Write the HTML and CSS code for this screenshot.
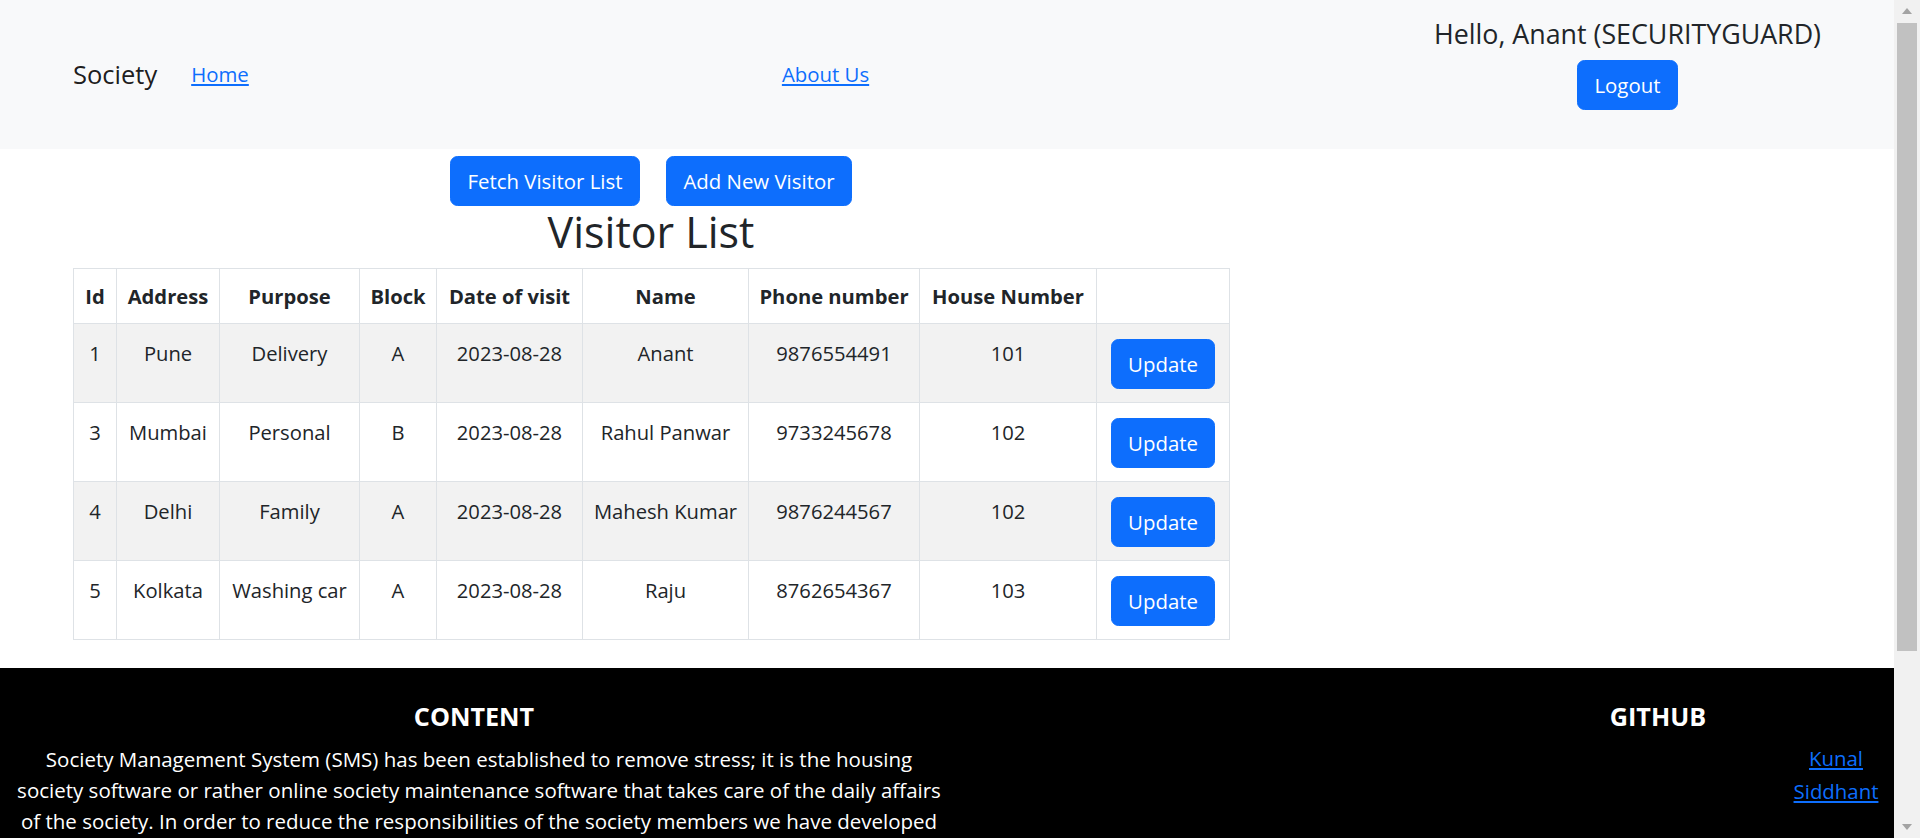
FILE: index.html
```html
<!DOCTYPE html>
<html lang="en">
<head>
<meta charset="utf-8">
<title>Society - Visitor List</title>
<link rel="stylesheet" href="styles.css">
</head>
<body>
<div class="page">
  <nav class="navbar">
    <a class="brand" href="#">Society</a>
    <div class="nav-links">
      <a href="#">Home</a>
      <a href="#">About Us</a>
    </div>
    <div class="user">
      <h4 class="hello">Hello, Anant (SECURITYGUARD)</h4>
      <button class="btn logout" type="button">Logout</button>
    </div>
  </nav>

  <main class="main">
    <div class="actions">
      <button class="btn" type="button">Fetch Visitor List</button>
      <button class="btn" type="button">Add New Visitor</button>
    </div>
    <h1 class="title">Visitor List</h1>
    <table class="visitors">
      <colgroup>
        <col class="c-id"><col class="c-addr"><col class="c-purpose"><col class="c-block"><col class="c-date"><col class="c-name"><col class="c-phone"><col class="c-house"><col class="c-act">
      </colgroup>
      <thead>
        <tr><th>Id</th><th>Address</th><th>Purpose</th><th>Block</th><th>Date of visit</th><th>Name</th><th>Phone number</th><th>House Number</th><th></th></tr>
      </thead>
      <tbody>
        <tr><td>1</td><td>Pune</td><td>Delivery</td><td>A</td><td>2023-08-28</td><td>Anant</td><td>9876554491</td><td>101</td><td><button class="btn row-btn" type="button">Update</button></td></tr>
        <tr><td>3</td><td>Mumbai</td><td>Personal</td><td>B</td><td>2023-08-28</td><td>Rahul Panwar</td><td>9733245678</td><td>102</td><td><button class="btn row-btn" type="button">Update</button></td></tr>
        <tr><td>4</td><td>Delhi</td><td>Family</td><td>A</td><td>2023-08-28</td><td>Mahesh Kumar</td><td>9876244567</td><td>102</td><td><button class="btn row-btn" type="button">Update</button></td></tr>
        <tr><td>5</td><td>Kolkata</td><td>Washing car</td><td>A</td><td>2023-08-28</td><td>Raju</td><td>8762654367</td><td>103</td><td><button class="btn row-btn" type="button">Update</button></td></tr>
      </tbody>
    </table>
  </main>

  <footer class="footer">
    <div class="f-col f-content">
      <h5 class="f-title">CONTENT</h5>
      <p class="f-text">Society Management System (SMS) has been established to remove stress; it is the housing society software or rather online society maintenance software that takes care of the daily affairs of the society. In order to reduce the responsibilities of the society members we have developed this system which keeps the records of visitors, members and maintenance in one place.</p>
    </div>
    <div class="f-col"></div>
    <div class="f-col f-github">
      <h5 class="f-title">GITHUB</h5>
      <ul class="gh-links">
        <li><a href="#">Kunal</a></li>
        <li><a href="#">Siddhant</a></li>
      </ul>
    </div>
  </footer>
</div>

<div class="scrollbar" aria-hidden="true">
  <div class="sb-arrow">
    <svg width="10" height="6" viewBox="0 0 10 6"><polygon points="5,0 10,6 0,6" fill="#a3a3a3"/></svg>
  </div>
  <div class="sb-track"><div class="sb-thumb"></div></div>
  <div class="sb-arrow">
    <svg width="10" height="6" viewBox="0 0 10 6"><polygon points="0,0 10,0 5,6" fill="#a3a3a3"/></svg>
  </div>
</div>
</body>
</html>
```

FILE: styles.css
```css
* {
  box-sizing: border-box;
}

html,
body {
  margin: 0;
  height: 100%;
  overflow: hidden;
}

body {
  display: flex;
  background: #fff;
  color: #212529;
  font-family: "Open Sans", "Noto Sans", sans-serif;
  font-size: 20.4px;
  line-height: 1.5;
}

.page {
  flex: 1;
  min-width: 0;
}

/* ---------- navbar ---------- */
.navbar {
  display: flex;
  align-items: center;
  height: 149px;
  padding: 0 73px;
  background: #f8f9fa;
}

.brand {
  margin-right: 34px;
  font-size: 25.5px;
  line-height: 1.5;
  color: rgba(0, 0, 0, 0.9);
  text-decoration: none;
}

.nav-links {
  display: flex;
  justify-content: space-between;
  width: 678px;
}

.nav-links a {
  color: #0d6efd;
  text-decoration: underline;
}

.user {
  display: flex;
  flex-direction: column;
  align-items: center;
  align-self: flex-start;
  margin-left: auto;
  padding-top: 18px;
}

.hello {
  margin: 0;
  font-size: 26.8px;
  font-weight: 500;
  line-height: 1.2;
}

/* ---------- buttons ---------- */
.btn {
  display: inline-block;
  padding: 9px 16.5px;
  border: 1px solid #0d6efd;
  border-radius: 7.5px;
  background: #0d6efd;
  color: #fff;
  font-family: inherit;
  font-size: 20.4px;
  line-height: 30px;
  cursor: pointer;
}

.logout {
  margin-top: 10px;
}

.row-btn {
  display: block;
  margin: 1px auto 0;
}

/* ---------- main ---------- */
.main {
  width: 1156px;
  margin-left: 73px;
}

.actions {
  display: flex;
  justify-content: center;
  gap: 26px;
  margin-top: 7px;
}

.title {
  margin: 0;
  text-align: center;
  font-size: 43px;
  font-weight: 500;
  line-height: 1.2;
}

.visitors {
  width: 1156px;
  margin-top: 10px;
  table-layout: fixed;
  border-collapse: collapse;
  font-size: 20.2px;
}

.c-id { width: 43px; }
.c-addr { width: 103px; }
.c-purpose { width: 140px; }
.c-block { width: 77px; }
.c-date { width: 146px; }
.c-name { width: 166px; }
.c-phone { width: 171px; }
.c-house { width: 177px; }
.c-act { width: 133px; }

.visitors th,
.visitors td {
  border: 1px solid #dee2e6;
  text-align: center;
  line-height: 30px;
  white-space: nowrap;
}

.visitors th {
  padding: 12px 6px;
  vertical-align: bottom;
  font-weight: 700;
}

.visitors td {
  padding: 14px 6px 13px;
  vertical-align: top;
}

.visitors tbody tr:nth-child(odd) td {
  background: #f2f2f2;
}

/* ---------- footer ---------- */
.footer {
  display: grid;
  grid-template-columns: 958px 1fr 452px;
  margin-top: 28px;
  padding: 33px 10px 40px 0;
  background: #000;
  color: #fff;
}

.f-col {
  padding: 0 12px;
}

.f-content {
  padding: 0 14px;
}

.f-github {
  padding: 0;
}

.f-title {
  margin: 0 0 13px;
  text-align: center;
  font-size: 25.2px;
  font-weight: 700;
  line-height: 1.2;
}

.f-content .f-title {
  margin-right: 10px;
}

.f-text {
  margin: 0;
  text-align: center;
  font-size: 20.5px;
  line-height: 31px;
}

.gh-links {
  width: 96px;
  margin: -2px 0 0 auto;
  padding: 0;
  list-style: none;
  text-align: center;
  line-height: 33px;
}

.gh-links a {
  color: #0d6efd;
}

/* ---------- fake window scrollbar ---------- */
.scrollbar {
  display: flex;
  flex: none;
  flex-direction: column;
  width: 26px;
  height: 838px;
  background: #f1f1f1;
}

.sb-arrow {
  display: flex;
  align-items: center;
  justify-content: center;
  height: 22px;
}

.sb-track {
  flex: 1;
}

.sb-thumb {
  height: 628px;
  margin: 1px 3px 0;
  background: #c1c1c1;
}
```
